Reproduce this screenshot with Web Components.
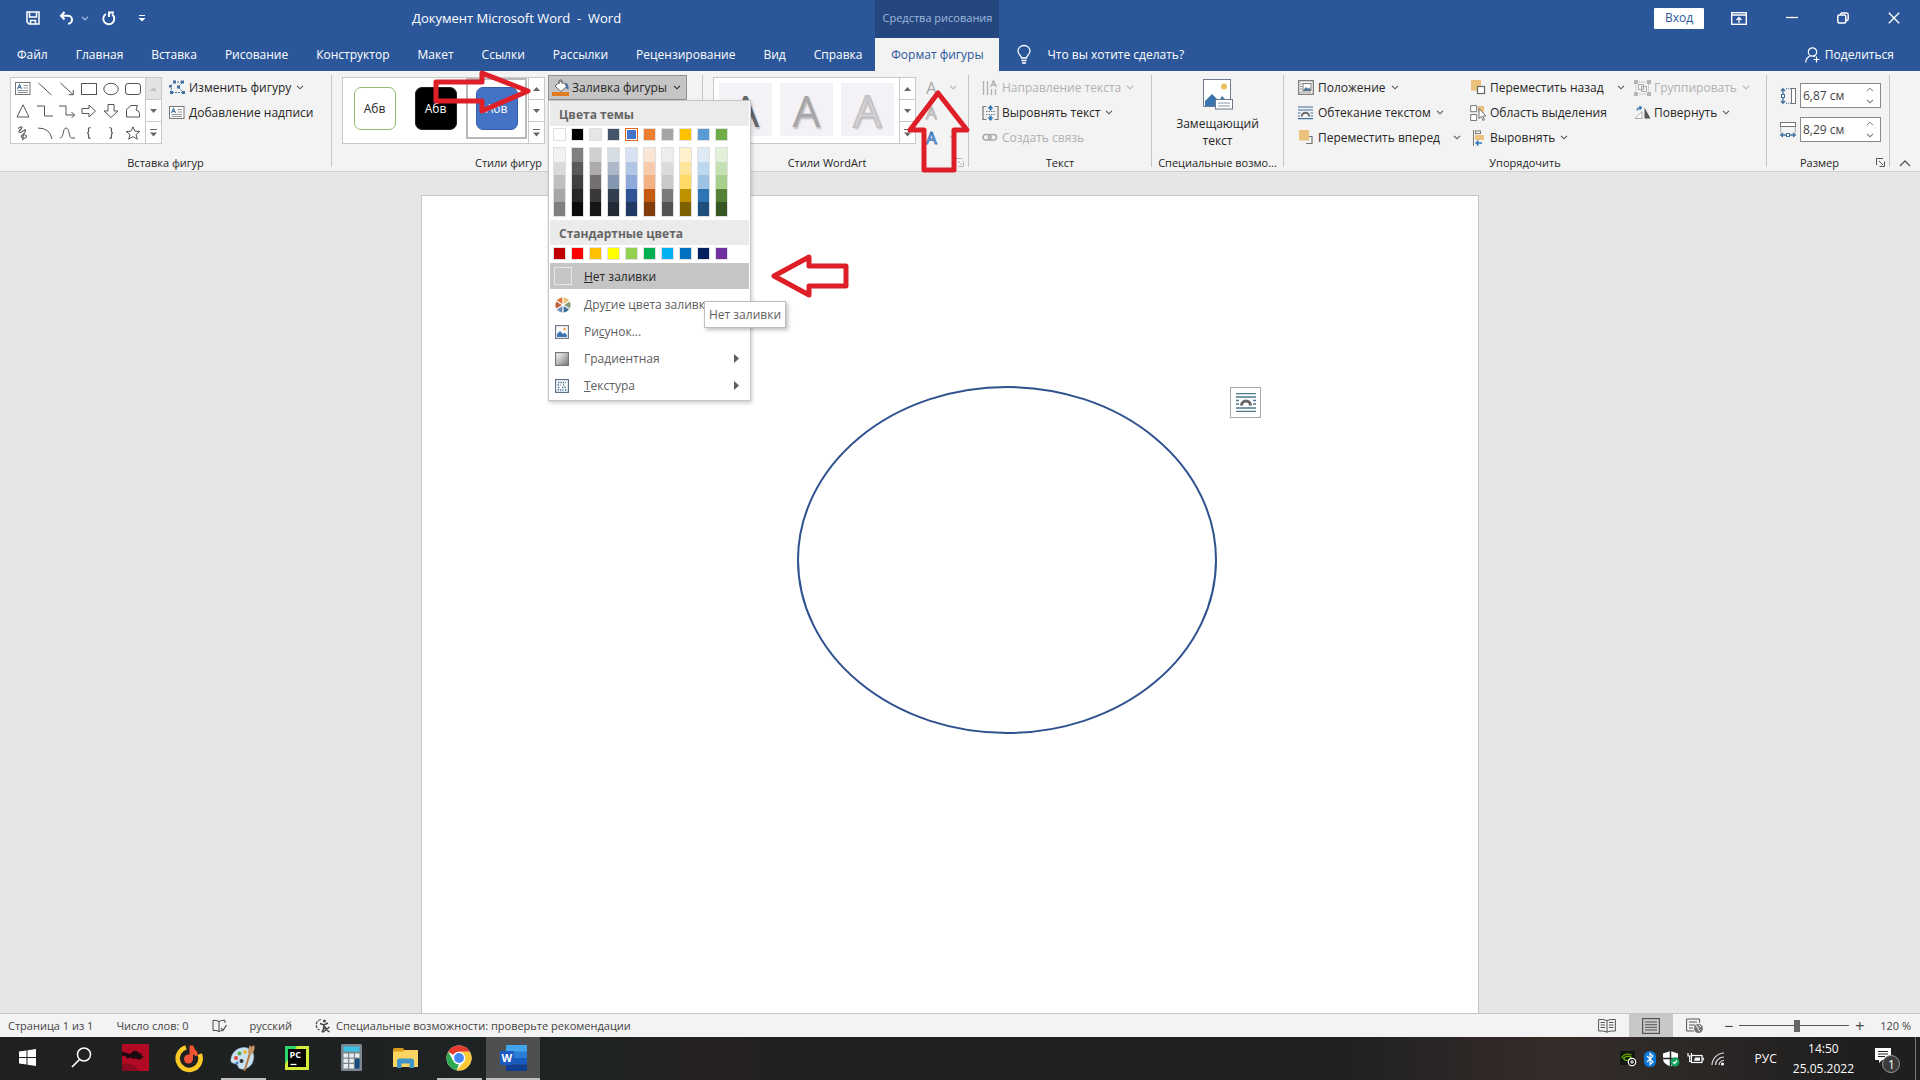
<!DOCTYPE html>
<html lang="ru">
<head>
<meta charset="utf-8">
<title>Документ Microsoft Word - Word</title>
<style>
html,body{margin:0;height:100%}
body{font-family:"Open Sans","Noto Sans",sans-serif;font-size:12px;line-height:16px;color:#262626;overflow:hidden}
</style>
</head>
<body>
<word-app></word-app>
<script>
const ICONS = {
  save:[14,14,'<path d="M1 1h12v12H3l-2-2zM3.500 1v5h7V1M4.500 13V9.500h5V13" fill="none" stroke="#fff" stroke-width="1.500"/>'],
  undo:[16,14,'<path d="M5.500 1L2 4.800l3.500 3.700M2.500 4.800H9a4 4 0 0 1 0 8" fill="none" stroke="#fff" stroke-width="2"/>'],
  redo:[15,15,'<path d="M5 3A5.500 5.500 0 1 0 11 3.300M8 6V1.500h5" fill="none" stroke="#fff" stroke-width="1.900"/>'],
  custom:[8,8,'<path d="M1 1.500h6" stroke="#fff"/><path d="M.5 4h7L4 7.500z" fill="#fff"/>'],
  chev:[8,5,'<path d="M1 .8l3 3 3-3" fill="none" stroke="currentColor" stroke-width="1.100"/>'],
  chevup:[12,7,'<path d="M1 6l5-5 5 5" fill="none" stroke="currentColor" stroke-width="1.300"/>'],
  spinup:[8,5,'<path d="M1 4.200l3-3 3 3" fill="none" stroke="currentColor"/>'],
  up:[7,4,'<path d="M0 4h7L3.500 0z" fill="currentColor"/>'],
  down:[7,4,'<path d="M0 0h7L3.500 4z" fill="currentColor"/>'],
  more:[7,8,'<path d="M0 .5h7" stroke="currentColor"/><path d="M0 3.500h7L3.500 7.500z" fill="currentColor"/>'],
  right:[5,9,'<path d="M0 0v9l5-4.500z" fill="#5e5e5e"/>'],
  ribbonopt:[16,13,'<rect x=".7" y=".7" width="14.600" height="11.600" fill="none" stroke="#fff" stroke-width="1.400"/><path d="M1 3h14" stroke="#fff" stroke-width="1.500"/><path d="M8 11V5.500M5.500 8L8 5.500 10.500 8" fill="none" stroke="#fff" stroke-width="1.300"/>'],
  min:[12,12,'<path d="M0 5.500h12" stroke="#fff" stroke-width="1.300"/>'],
  restore:[12,12,'<rect x=".8" y="3" width="8" height="8" rx="1.500" fill="none" stroke="#fff" stroke-width="1.500"/><path d="M3.500 3V2.500Q3.500 1 5 1h4.500Q11.200 1 11.200 2.800V7q0 1.500-1.500 1.500H9" fill="none" stroke="#fff" stroke-width="1.400"/>'],
  close:[12,12,'<path d="M.8.8l10.400 10.400M11.200.8L.8 11.200" stroke="#fff" stroke-width="1.400"/>'],
  bulb:[14,19,'<path d="M4.500 13C4.500 10.500 1 9.500 1 6a6 5.500 0 0 1 12 0c0 3.500-3.500 4.500-3.500 7zM4.500 15.500h5M5 18h4" fill="none" stroke="#fff" stroke-width="1.300"/>'],
  share:[15,16,'<circle cx="7.500" cy="5" r="4.200" fill="none" stroke="#fff" stroke-width="1.200"/><path d="M.7 15.500C1 12 2.500 10 5 9M8 8.800l2 1M11.500 9.500v6M8.500 12.500h6" fill="none" stroke="#fff" stroke-width="1.200"/>'],
  textbox:[16,14,'<rect x=".5" y=".5" width="14.500" height="12" fill="#fff" stroke="#777"/><path d="M2.500 7l2-4.500 2 4.500M3.300 5.500h2.500" fill="none" stroke="#41719c" stroke-width="1.100"/><path d="M8.500 3.500H13M8.500 6H13M2.500 8.500H13M2.500 10.500H13" stroke="#888" stroke-width=".9"/>'],
  line:[16,14,'<path d="M1.500 1l13 12" stroke="#555" fill="none"/>'],
  arrow:[16,14,'<path d="M1.500 1l12.500 11.500M14.300 8v4.700H9.500" stroke="#555" fill="none"/>'],
  rect:[16,14,'<rect x=".5" y="1.500" width="15" height="11" stroke="#555" fill="none"/>'],
  oval:[16,14,'<ellipse cx="8" cy="7" rx="7.200" ry="5.700" stroke="#555" fill="none"/>'],
  rrect:[16,14,'<rect x=".5" y="1.500" width="15" height="11" rx="2.500" stroke="#555" fill="none"/>'],
  tri:[16,14,'<path d="M8 .8L14 13H2z" stroke="#555" fill="none"/>'],
  elbow:[16,14,'<path d="M0 2h7.500v10H16" stroke="#555" fill="none"/>'],
  elbowa:[16,14,'<path d="M0 2h7v9h8.500M12.500 8l3 3-3 3" stroke="#555" fill="none"/>'],
  ra:[16,14,'<path d="M1 4.500h7V1l6.500 6L8 13V9.500H1z" stroke="#555" fill="none"/>'],
  da:[16,14,'<path d="M5 .5h6v6.500h4L8 13.500 1 7h4z" stroke="#555" fill="none"/>'],
  free:[16,14,'<path d="M1.500 13V5.500L6 1.500h6.500L11 6q3.500.5 3.500 3.500V13z" stroke="#555" fill="none"/>'],
  scrib:[16,14,'<path d="M3 2.500C7-.5 8 1 6 3S3 6 5 6.500s6-5 5.500-1.500S5 9 6.500 11s5 1.500 5-.5S8 8 8 10.500 9 14 7 13.500" stroke="#555" fill="none" stroke-width="1.100"/>'],
  arc:[16,14,'<path d="M1 2q12 0 14 11" stroke="#555" fill="none"/>'],
  curve:[16,14,'<path d="M1 12C5 12 3.500 2 7 2s3 10 5.500 10H16" stroke="#555" fill="none"/>'],
  lb:[16,14,'<path d="M9.500 1.500q-2 0-2 2v2q0 1.500-1.500 1.500 1.500 0 1.500 1.500v2q0 2 2 2" stroke="#555" fill="none" stroke-width="1.200"/>'],
  rb:[16,14,'<path d="M6.500 1.500q2 0 2 2v2q0 1.500 1.500 1.500-1.500 0-1.500 1.500v2q0 2-2 2" stroke="#555" fill="none" stroke-width="1.200"/>'],
  star:[16,14,'<path d="M8 .8l1.900 4.400 5 .3-3.900 3 1.300 4.700L8 10.600l-4.300 2.600L5 8.500l-3.900-3 5-.3z" stroke="#555" fill="none"/>'],
  edit:[16,15,'<path d="M5 2h8M2.500 4.500L2 12M14 12.500H4M13 3l-4 4 5 5" fill="none" stroke="#41719c" stroke-dasharray="2 1"/><g fill="#41719c"><path d="M4 .5h3v3H4zM12 .5h3v3h-3zM1 11h3v3H1zM13 11h3v3h-3zM8 5.500h3v3H8zM0 5h2.500v2.500H0z"/></g>'],
  bucket:[18,17,'<path d="M3 7l6-5 6 5-6 5.500z" fill="#fff" stroke="#666"/><path d="M7 5V1.500q1.500-1.500 3 0V5" fill="none" stroke="#666"/><path d="M13 3.500q4 1 3.500 7-2.500 0-2.500-3z" fill="#41719c"/><path d="M0 13h17v4H0z" fill="#e07b1f"/>'],
  tdir:[17,16,'<path d="M1.500 1v14M5.500 1v14M9.500 9v6M13.500 9v6M8.500 7L11.500.8 14.500 7M9.500 5h4" fill="none" stroke="#b0b0b0" stroke-width="1.300"/>'],
  talign:[17,16,'<path d="M4.500 1.500H1v13h3.500M12.500 1.500H16v13h-3.500" fill="none" stroke="#777" stroke-width="1.200"/><path d="M4 6.500h9M4 9.500h9" stroke="#777" stroke-dasharray="1.500 1"/><path d="M8.500 0l3 3.500h-2v2h-2v-2h-2zM8.500 16l3-3.500h-2v-2h-2v2h-2z" fill="#2e75b5"/>'],
  link:[16,9,'<rect x="1" y="1.500" width="8" height="5.500" rx="2.700" fill="none" stroke="#aaa" stroke-width="1.700"/><rect x="6.500" y="1.500" width="8" height="5.500" rx="2.700" fill="none" stroke="#aaa" stroke-width="1.700"/>'],
  alt:[30,31,'<rect x=".5" y=".5" width="27" height="27" fill="#fff" stroke="#6d7b8c"/><circle cx="21" cy="7.500" r="3" fill="#e8c15c"/><path d="M2 27v-5l7-7 7 7 3-5 5 5v5z" fill="#3a75b0"/><rect x="12.500" y="20.500" width="17" height="9.500" fill="#fff" stroke="#6d7b8c"/><path d="M15 24h12M15 27h12" stroke="#8c9aab"/>'],
  pos:[16,15,'<rect x=".7" y=".7" width="14.600" height="13.600" fill="#fff" stroke="#7a7a7a" stroke-width="1.300"/><rect x="5" y="3.500" width="8" height="7" fill="#fff" stroke="#777"/><path d="M5.500 10l2.500-3 2 2 1-1.500 2 2.500z" fill="#41719c"/><path d="M2 4h2M2 6.500h2M2 9h2M2 12h11" stroke="#888"/>'],
  wrap:[15,14,'<path d="M0 1h15M0 4h15M0 12.700h15M0 7h2.500M12.500 7H15M0 10h2M13 10h2" stroke="#41719c" stroke-width="1.200"/><path d="M3.800 10.500a3.700 3.700 0 0 1 7.400 0" fill="none" stroke="#666" stroke-width="2"/>'],
  fwd:[16,15,'<path d="M8 13.500h6v-7h-3" fill="none" stroke="#777" stroke-width="1.200"/><path d="M1 0h10v10.500H1z" fill="#ebc17c"/>'],
  back:[16,15,'<path d="M1 0h10v10.500H1z" fill="#ebc17c"/><rect x="7.500" y="6.500" width="7" height="7" fill="#fff" stroke="#666" stroke-width="1.200"/>'],
  selp:[17,16,'<path d="M.7.7h6v6h-6zM.7 9.500h6v6h-6z" fill="#fff" stroke="#777"/><path d="M8 1h6v7H8z" fill="#ebc17c"/><path d="M9 3.500v10l2.300-2 1.700 4 1.500-.7-1.700-3.800h3z" fill="#fff" stroke="#666" stroke-width=".9"/>'],
  align:[15,16,'<path d="M3.500 0v16" stroke="#777"/><rect x="5.500" y="1" width="5" height="2.500" fill="#fff" stroke="#777"/><path d="M5 5h9v5H5z" fill="#ebc17c"/><path d="M12 13H6M8.500 10.500L6 13l2.500 2.500" fill="none" stroke="#2e75b5" stroke-width="1.300"/>'],
  group:[17,16,'<path d="M2 2h12.500v12H2z" fill="none" stroke="#b5b5b5" stroke-dasharray="1.500 1"/><rect x="4.500" y="4.500" width="5" height="5" fill="none" stroke="#aaa"/><rect x="7.500" y="6.500" width="5" height="5" fill="none" stroke="#aaa"/><path d="M0 0h4v4H0zM13 0h4v4h-4zM0 12h4v4H0zM13 12h4v4h-4z" fill="#b5b5b5"/>'],
  rotate:[17,13,'<path d="M8 12.500H1l7-7z" fill="#fff" stroke="#aaa"/><path d="M10.500 12.500V1.500l6 11z" fill="#555"/><path d="M3 4.500Q3.500 1.500 7 1.700M5.500 0L7.500 1.700 5.500 3.800" fill="none" stroke="#2e75b5" stroke-width="1.200"/>'],
  hgt:[16,16,'<path d="M3 1v5M3 10v5M1 3l2-2.300L5 3M1 13l2 2.300L5 13" fill="none" stroke="#41719c" stroke-width="1.300"/><rect x="1.500" y="6.500" width="3" height="3" fill="#fff" stroke="#41719c"/><path d="M6 .7h5M6 15.200h5" stroke="#41719c" stroke-dasharray="1 1"/><rect x="11.500" y=".5" width="4" height="15" fill="#fff" stroke="#777"/>'],
  wid:[16,16,'<path d="M1 13h5M10 13h5M3 11L.7 13 3 15M13 11l2.300 2L13 15" fill="none" stroke="#41719c" stroke-width="1.300"/><rect x="6.500" y="11.500" width="3" height="3" fill="#fff" stroke="#41719c"/><path d="M.7 5.500v5M15.300 5.500v5" stroke="#41719c" stroke-dasharray="1 1"/><rect x=".5" y=".5" width="15" height="4" fill="#fff" stroke="#777"/>'],
  launch:[9,9,'<path d="M.5 7V.5H7M3 3l4 4M8.500 3.500v5h-5" fill="none" stroke="currentColor"/>'],
  wheel:[16,16,'<circle cx="8" cy="8" r="7.500" fill="#fff"/><path d="M8 8V.5A7.500 7.500 0 0 1 14.500 4.200z" fill="#ebc17c"/><path d="M8 8V.5A7.500 7.500 0 0 0 1.500 4.200z" fill="#e07b3a"/><path d="M8 8l6.500-3.800a7.500 7.500 0 0 1 0 7.600z" fill="#8a9a7a"/><path d="M8 8L1.500 4.200a7.500 7.500 0 0 0 0 7.600z" fill="#c4623f"/><path d="M8 8l6.500 3.800A7.500 7.500 0 0 1 8 15.500z" fill="#41719c"/><path d="M8 8l-6.500 3.800A7.500 7.500 0 0 0 8 15.500z" fill="#6c8fb8"/><path d="M8 0v16M1.500 4l13 8M14.500 4l-13 8" stroke="#fff" stroke-width="1.200"/>'],
  pic:[14,14,'<rect x=".6" y=".6" width="12.800" height="12.800" fill="#fff" stroke="#6d7b8c" stroke-width="1.200"/><circle cx="9.500" cy="4" r="1.400" fill="#e8a35c"/><path d="M2 12V9l3-3 3 3 1.500-1.500L12 10v2z" fill="#3a75b0"/>'],
  grad:[14,14,'<defs><linearGradient id="g" x1="0" y1="0" x2="1" y2="1"><stop offset="0" stop-color="#fff"/><stop offset="1" stop-color="#777"/></linearGradient></defs><rect x=".6" y=".6" width="12.800" height="12.800" fill="url(#g)" stroke="#777" stroke-width="1.200"/>'],
  tex:[14,14,'<rect x=".6" y=".6" width="12.800" height="12.800" fill="#fff" stroke="#5f7488" stroke-width="1.200"/><path d="M3 3.500h8M2.500 6h3M8 6h1M3 8.500h2M7 8.500h4.500M2.500 11h6M10 11h1.500" stroke="#41719c" stroke-width="1.300" stroke-dasharray="1.400 1"/>'],
  layout:[20,19,'<path d="M0 .7h20M0 4h20M0 15h20M0 18.300h20M0 7.500h3M17 7.500h3M0 11h3M17 11h3" stroke="#4f7a8c" stroke-width="1.300"/><path d="M5.500 12.500a4.500 4.500 0 0 1 9 0" fill="none" stroke="#666" stroke-width="3"/>'],
  spell:[15,14,'<path d="M7 2.500Q4 .8 1 1.500v10q3-.7 6 1zM7 2.500Q9 1 13 1.300V4M7 12.500q2-1 3-1" fill="none" stroke="#444"/><path d="M9 9l2 2.500L14.500 6" fill="none" stroke="#444" stroke-width="1.200"/>'],
  acc:[16,15,'<path d="M6 1.500A5.500 5.500 0 0 0 4.500 12" fill="none" stroke="#444" stroke-width="1.200" stroke-dasharray="3 1"/><path d="M5 5.500l4 1.500 4-2M9 7v3l-2 4M9 8l4 5M8 9l6.500 5M14.500 9L7.500 14.500" fill="none" stroke="#444" stroke-width="1.500"/><circle cx="9.500" cy="3" r="1.500" fill="#444"/>'],
  read:[18,15,'<path d="M9 2.500v12M9 2.500Q5 1 .6 1.500v11.500Q5 12.500 9 14q4-1.500 8.400-1V1.500Q13 1 9 2.500z" fill="none" stroke="#555"/><path d="M2.500 4.500H7M2.500 7H7M2.500 9.500H7M11 4.500h4.500M11 7h4.500M11 9.500h4.500" stroke="#555"/>'],
  print:[18,16,'<rect x=".6" y=".6" width="16.800" height="14.800" fill="none" stroke="#555" stroke-width="1.200"/><path d="M3 4h12M3 6.700h12M3 9.300h12M3 12h12" stroke="#555"/>'],
  web:[18,16,'<path d="M8 13H.6V1h13v4" fill="none" stroke="#555"/><path d="M3 4h8M3 7h6M3 10h4" stroke="#555"/><circle cx="12.500" cy="10.500" r="4.500" fill="#777"/><path d="M10 8q2 0 2 2t2 3M13 7l2 2" stroke="#fff" fill="none"/>'],
  win:[17,17,'<path d="M0 2.500L7.500 1.400V8H0zM8.500 1.300L17 0v8H8.500zM0 9h7.500v6.600L0 14.500zM8.500 9H17v8l-8.500-1.300z" fill="#fff"/>'],
  search:[21,21,'<circle cx="13" cy="7.500" r="6.500" fill="none" stroke="#fff" stroke-width="1.500"/><path d="M8.500 12.500L1 20" stroke="#fff" stroke-width="1.700"/>'],
  red:[27,27,'<path d="M0 0h27v27H0z" fill="#b30a24"/><path d="M0 7.500l5 1.500 3 1 4-3.500 5 1.500-1 1 5 1-2 1 4 2.500-4-.5 2 2.500-4-1 1 2-4-2-3 .500-2-1.500-4 1-1-2-4-1z" fill="#1d0a10"/><path d="M0 20q8-2 14 3l3 4H0z" fill="#8a0a20"/>'],
  music:[28,28,'<path d="M11 3.300A11.500 11.500 0 1 0 24.800 10" fill="none" stroke="#fbc926" stroke-width="4.500"/><circle cx="13.500" cy="15" r="4.500" fill="#f25335"/><path d="M14.500 1.500h3.800q1 4 4.200 7v4q-2.500-.5-4.500-2.500V15h-3.500z" fill="#f25335"/>'],
  paint:[28,28,'<path d="M2 15C3 7 11 2 18 4c6 2 8 7 6 13-1 5-7 9-12 8-4-1-2-4-5-5S1 19 2 15z" fill="#c9e2f2" stroke="#8fb3cc" stroke-width=".6"/><circle cx="7" cy="14" r="2" fill="#e04a3a"/><circle cx="10.500" cy="9.500" r="2" fill="#54a844"/><circle cx="16" cy="8" r="2" fill="#e8b93a"/><circle cx="12.500" cy="17" r="2" fill="#333"/><circle cx="8" cy="19" r="1.500" fill="#3e7fc1"/><path d="M20 9l2 .5-5.500 17-2 .5z" fill="#b67a42"/><path d="M19 9q0-5 2-8l1.500 2L25 1q2 4-2 9z" fill="#c49665"/>'],
  pc:[24,24,'<path d="M0 0h24v24H0z" fill="#d6ec3a"/><path d="M0 0h12L0 18z" fill="#2ed56a"/><path d="M3 3h18v18H3z" fill="#050505"/><path d="M5.500 18.500h6" stroke="#fff" stroke-width="1.300"/><text x="4.500" y="12" font-family="Open Sans,sans-serif" font-weight="700" font-size="9" fill="#fff">PC</text>'],
  calc:[21,27,'<rect width="21" height="27" rx="1.500" fill="#7c868e"/><path d="M2.500 2.500h16v5h-16z" fill="#3cc3e6"/><path d="M2.500 9.500h4.500v4H2.500zM8.300 9.500h4.500v4H8.300zM14 9.500h4.500v4H14zM2.500 14.700h4.500v4H2.500zM8.300 14.700h4.500v4H8.300zM2.500 20h4.500v4.500H2.500zM8.300 20h4.500v4.500H8.300z" fill="#e8edf0"/><path d="M14 14.700h4.500v9.800H14z" fill="#154a7e"/>'],
  folder:[25,20,'<path d="M0 1.500Q0 0 1.500 0H10l1.500 2H24q1 0 1 1.500v15H0z" fill="#d79b1d"/><path d="M0 3.500h10L12 2h13v17H0z" fill="#fcd462"/><path d="M4 20v-7q0-2.500 2.500-2.500h12Q21 10.500 21 13v7h-4.500v-4.500h-8V20z" fill="#3f94c9"/>'],
  chrome:[26,26,'<circle cx="13" cy="13" r="12.500" fill="#fff"/><path d="M13 .5a12.500 12.500 0 0 1 10.800 6.200H13a6.300 6.300 0 0 0-5.500 3.200L2.200 6.700A12.500 12.500 0 0 1 13 .5z" fill="#e33b2e"/><path d="M2.200 6.700l5.300 9.500A6.300 6.300 0 0 0 13 19.300L10.500 25.200A12.500 12.500 0 0 1 2.200 6.700z" fill="#2da94f"/><path d="M23.800 6.700A12.500 12.500 0 0 1 10.500 25.200l8-9a6.300 6.300 0 0 0 0-6.300L13 6.700z" fill="#fcc934"/><circle cx="13" cy="13" r="6.200" fill="#fff"/><circle cx="13" cy="13" r="4.900" fill="#4486f4"/>'],
  word:[27,26,'<path d="M6 0h21v7H6z" fill="#41a5ee"/><path d="M6 6.500h21V13H6z" fill="#2b7cd3"/><path d="M6 13h21v6.500H6z" fill="#185abd"/><path d="M6 19.500h21V25q0 1-1 1H7q-1 0-1-1z" fill="#103f91"/><rect y="6" width="14" height="14" rx="1.200" fill="#1c5bbf"/><text x="1.500" y="17" font-family="Open Sans,sans-serif" font-weight="700" font-size="11" fill="#fff">W</text>'],
  nvidia:[17,16,'<path d="M0 0h15v14H0z" fill="#101810"/><path d="M1.500 7q4-6 10-3M3.500 7.500q3.500-4 7.500-1.500-1.500 3.500-4.500 3.500-2 0-3-2z" fill="none" stroke="#76b900" stroke-width="1.200"/><circle cx="12" cy="11" r="3.700" fill="#111" stroke="#fff" stroke-width="1.200"/><path d="M10 11h4M12 9v4" stroke="#fff"/>'],
  bt:[12,16,'<rect width="12" height="16" rx="5.500" fill="#0a78d7"/><path d="M3 5l6 6-3 2.500v-11L9 5l-6 6" fill="none" stroke="#fff" stroke-width="1.100"/>'],
  shield:[17,16,'<path d="M7.500 0L15 2.500V8q0 5-7.500 7.500Q0 13 0 8V2.500z" fill="#fff"/><path d="M7.500 0v15.500M0 7.500h15" stroke="#222" stroke-width="1.400"/><circle cx="12" cy="11" r="4.500" fill="#12a05c"/><path d="M10 11l1.500 1.500L14 9.500" fill="none" stroke="#fff" stroke-width="1.200"/>'],
  batt:[17,13,'<rect x="4.500" y="3.500" width="10.500" height="7" fill="none" stroke="#fff" stroke-width="1.200"/><path d="M15.500 5.500h1.300v3h-1.300zM8 5.500h5v3.200H7z" fill="#fff"/><path d="M1 1v3h3.500V1M2.700 4v5.500h2" fill="none" stroke="#fff" stroke-width="1.200"/>'],
  wifi:[14,14,'<path d="M1 13A12.500 12.500 0 0 1 13 1M4.500 13A8.500 8.500 0 0 1 13 5M8 13a5 5 0 0 1 5-4.500" fill="none" stroke="#ddd" stroke-width="1.200"/><circle cx="11.500" cy="12" r="1.600" fill="#fff"/>'],
  note:[26,26,'<path d="M0 1h16v12H7l-3 3v-3H0z" fill="#fff"/><path d="M3 4.500h10M3 7h10M3 9.500h7" stroke="#222"/><circle cx="16" cy="17" r="8.500" fill="#3b3b3b" stroke="#9a9a9a"/><text x="13" y="21.500" font-family="Open Sans,sans-serif" font-size="12" fill="#fff">1</text>']
};

const BASE = `*{box-sizing:border-box}
button,input{font:inherit;color:inherit;margin:0;padding:0;border:0;background:none;text-align:left}`;

class Base extends HTMLElement {
  connectedCallback(){
    if (this.shadowRoot) return;
    this.attachShadow({mode:'open'}).innerHTML = `<style>${BASE}${this.css()}</style>${this.html()}`;
  }
  css(){ return ''; }
  html(){ return '<slot></slot>'; }
}
const define = (name, css, html) => customElements.define(name, class extends Base {
  css(){ return css; }
  html(){ return typeof html === 'function' ? html(this) : html; }
});
const icon = n => `<x-icon name="${n}"></x-icon>`;

define('x-icon', ':host{display:inline-flex;flex:none}svg{display:block;overflow:visible}', el => {
  const [w,h,body] = ICONS[el.getAttribute('name')];
  return `<svg width="${w}" height="${h}" viewBox="0 0 ${w} ${h}" aria-hidden="true">${body}</svg>`;
});

/* Title bar */
define('title-bar', `:host{display:flex;height:38px;background:#2b579a;color:#fff;align-items:center;flex:none;box-sizing:border-box;padding-bottom:2px}
.quick{display:flex;align-items:center;width:412px;padding-left:26px}
.quick button{display:flex}
.quick .undo{margin-left:19px}.quick .ch{margin-left:6px;opacity:.7}.quick .redo{margin-left:12px}.quick .cu{margin-left:22px}
h1{font-size:13px;font-weight:400;margin:0;flex:1;white-space:pre}
.login{width:50px;height:21px;background:#fff;color:#2b579a;text-align:center;border-radius:1px}
.win{display:flex;align-items:center;padding:0 20px 0 27px;gap:39px}
.win button{display:flex}`,
`<div class="quick"><button aria-label="Сохранить">${icon('save')}</button><button class="undo" aria-label="Отменить">${icon('undo')}</button><button class="ch" aria-label="Ещё">${icon('chev')}</button><button class="redo" aria-label="Повторить">${icon('redo')}</button><button class="cu" aria-label="Настройка панели">${icon('custom')}</button></div>
<h1>Документ Microsoft Word  -  Word</h1>
<button class="login">Вход</button>
<div class="win"><button aria-label="Параметры ленты">${icon('ribbonopt')}</button><button aria-label="Свернуть">${icon('min')}</button><button aria-label="Восстановить">${icon('restore')}</button><button aria-label="Закрыть">${icon('close')}</button></div>`);

/* Ribbon tabs */
define('ribbon-tabs', `:host{display:flex;height:33px;background:#2b579a;color:#fff;flex:none;padding:0 26px 0 17px;align-items:stretch}
nav{display:flex;gap:28px;margin-right:13px}
.tell{display:flex;align-items:center;gap:16px;padding-left:18px;flex:1}
.share{display:flex;align-items:center;gap:5px}`,
`<nav><slot></slot></nav><slot name="context"></slot><button class="tell">${icon('bulb')}Что вы хотите сделать?</button><button class="share">${icon('share')}Поделиться</button>`);
define('ribbon-tab', `:host{display:flex;position:relative}
button{display:flex;align-items:center;justify-content:center}
:host([context]) button{width:124px;background:#f3f3f3;color:#2b579a}
span{position:absolute;left:0;right:0;bottom:100%;height:38px;padding-bottom:2px;background:#24477f;color:#a0b7dc;display:flex;align-items:center;justify-content:center;font-size:11px}`,
el => `${el.hasAttribute('context') ? `<span>${el.getAttribute('context')}</span>` : ''}<button><slot></slot></button>`);

/* Ribbon group and its buttons */
define('ribbon-group', `:host{display:flex;flex:none;width:var(--w)}
.col{flex:1;display:flex;flex-direction:column;min-width:0}
.body{flex:1;display:flex;padding:4px 0 0 var(--pad,10px)}
.foot{display:flex;height:17px;align-items:center;padding:0 4px;gap:8px;font-size:11px}
.foot p{margin:0;flex:1;text-align:center;white-space:nowrap}
.foot button{display:flex;width:9px;color:#555}
.foot button:disabled{color:#b5b5b5}
i{width:1px;background:#c6c6c6;margin:4px 0}`,
el => `<div class="col"><div class="body"><slot></slot></div><div class="foot"><p>${el.getAttribute('label')}</p>${el.hasAttribute('launcher') ? `<button aria-label="Параметры" ${el.getAttribute('launcher') === 'off' ? 'disabled' : ''}>${icon('launch')}</button>` : ''}</div></div><i></i>`);
define('ribbon-button', `:host{display:flex;height:25px;white-space:nowrap}
button{display:flex;align-items:center;flex:none}
.ic{width:20px;display:flex;flex:none}
.ch{margin-left:5px;display:flex;color:#555}
:host([split]) .ch{margin-left:13px}
:host([disabled]){color:#b1b1b1}:host([disabled]) .ch{color:#b1b1b1}`,
el => `<button ${el.hasAttribute('disabled') ? 'disabled' : ''}><span class="ic">${icon(el.getAttribute('icon'))}</span><slot></slot>${el.hasAttribute('menu') ? `<span class="ch">${icon('chev')}</span>` : ''}</button>`);
define('button-stack', ':host{display:flex;flex-direction:column}', '<slot></slot>');

/* Gallery frame with its scroll column */
define('gallery-box', `:host{display:flex;border:1px solid #c9c9c9;background:#fff;height:67px;margin-top:2px;flex:none;box-sizing:border-box}
.items{flex:1;display:flex}
.sc{display:flex;flex-direction:column;width:16px;border-left:1px solid #c9c9c9;color:#666}
.sc button{flex:1;display:flex;align-items:center;justify-content:center}
.sc button+button{border-top:1px solid #c9c9c9}
:host([top]) .sc button:first-child{background:#e3e3e3;color:#c3c3c3}`,
`<div class="items"><slot></slot></div><div class="sc"><button aria-label="Вверх">${icon('up')}</button><button aria-label="Вниз">${icon('down')}</button><button aria-label="Дополнительно">${icon('more')}</button></div>`);
define('shape-grid', `:host{display:grid;grid-template-columns:repeat(6,22px);grid-auto-rows:22px;flex:1;padding-left:1px}
button{display:flex;align-items:center;justify-content:center}`,
['textbox','line','arrow','rect','oval','rrect','tri','elbow','elbowa','ra','da','free','scrib','arc','curve','lb','rb','star'].map(n => `<button aria-label="${n}">${icon(n)}</button>`).join(''));
define('style-tile', `:host{display:flex;width:61px;height:61px;box-sizing:border-box;align-items:center;justify-content:center}
:host(:first-child){margin-left:1px}
:host([selected]){border:2px solid #b9b9b9}
button{width:42px;height:43px;flex:none;border-radius:7px;background:var(--bg);border:1px solid var(--bd);color:var(--fg);text-align:center}`, '<button><slot></slot></button>');
define('art-tile', `:host{display:flex;width:53px;height:53px;margin:5px 0 0 5px;background:#f4f2f6}
:host(:not(:first-child)){margin-left:8px}
button{flex:1;text-align:center;font-size:44px;line-height:52px;color:var(--fg);-webkit-text-stroke:var(--st,0);text-shadow:1px 2px 2px rgba(0,0,0,.25)}`, '<button><slot></slot></button>');
define('art-buttons', `:host{display:flex;flex-direction:column;margin-left:10px;font-size:17px;color:#a9a9a9}
button{height:25px;display:flex;align-items:center;gap:12px}
.b{color:#fff;-webkit-text-stroke:1px #b5b5b5}.c{color:#fff;-webkit-text-stroke:1px #3c78c0}
x-icon{color:#b1b1b1}`,
`<button><span>A</span>${icon('chev')}</button><button><span class="b">A</span></button><button><span class="c">A</span>${icon('chev')}</button>`);

/* Shape fill drop-down */
const THEME = [['ffffff','f2f2f2','d9d9d9','bfbfbf','a6a6a6','7f7f7f'],['000000','7f7f7f','595959','3f3f3f','262626','0c0c0c'],['e7e6e6','d0cece','aeabab','757070','3a3838','171616'],['44546a','d6dce4','adb9ca','8496b0','323f4f','222a35'],['4472c4','d9e2f3','b4c6e7','8eaadb','2f5496','1f3864'],['ed7d31','fbe5d5','f7cbac','f4b183','c55a11','833c0b'],['a5a5a5','ededed','dbdbdb','c9c9c9','7b7b7b','525252'],['ffc000','fff2cc','fee599','ffd965','bf9000','7f6000'],['5b9bd5','deebf6','bdd7ee','9cc3e5','2e75b5','1e4e79'],['70ad47','e2efd9','c5e0b3','a8d08d','538135','375623']];
const STD = ['c00000','ff0000','ffc000','ffff00','92d050','00b050','00b0f0','0070c0','002060','7030a0'];
const sw = (c, cls='') => `<button class="${cls}" style="background:#${c}" aria-label="#${c}"></button>`;
define('fill-menu', `:host{display:block;position:absolute;z-index:5;left:0;top:100%;width:203px;box-sizing:border-box;background:#fff;border:1px solid #c6c6c6;box-shadow:1px 2px 4px rgba(0,0,0,.2);color:#5e5e5e;padding:0 1px 1px}
h2{margin:0;height:25px;background:#ebebeb;padding-left:9px;font-size:12px;line-height:28px;font-weight:700;color:#666}
.row{display:flex;gap:5px;padding:2px 3px 3px}
.row button{width:13px;height:13px;border:1px solid #e0e0e0}
.row .sel{border:1px solid #e0641c;box-shadow:inset 0 0 0 1px #fff}
.cols{display:flex;gap:5px;padding:3px}
.cols div{display:flex;flex-direction:column;width:13px;height:70px;border:1px solid #e0e0e0}
.cols button{flex:1}
`, `<h2>Цвета темы</h2><div class="row">${THEME.map((c,i) => sw(c[0], i === 4 ? 'sel' : '')).join('')}</div>
<div class="cols">${THEME.map(c => `<div>${c.slice(1).map(x => sw(x)).join('')}</div>`).join('')}</div>
<h2>Стандартные цвета</h2><div class="row">${STD.map(c => sw(c)).join('')}</div><slot></slot>`);
define('menu-item', `:host{display:flex;height:27px;position:relative}
:host([active]){background:#c5c5c5;color:#262626;height:26px;margin-bottom:2px}
button{display:flex;align-items:center;flex:1;white-space:pre}
.ic{width:34px;padding-left:5px;display:flex;flex:none;align-items:center}
.none{width:18px;height:18px;border:1px solid #e6e6e6;margin-left:-1px}
.t{flex:1;padding-top:1px}.ar{padding-right:10px;display:flex}`,
el => `<button><span class="ic">${el.hasAttribute('icon') ? icon(el.getAttribute('icon')) : '<i class="none"></i>'}</span><span class="t"><slot></slot></span>${el.hasAttribute('sub') ? `<span class="ar">${icon('right')}</span>` : ''}</button><slot name="tip"></slot>`);
define('tool-tip', ':host{position:absolute;z-index:6;left:154px;top:38px;box-sizing:border-box;background:#fff;border:1px solid #bebebe;box-shadow:2px 2px 4px rgba(0,0,0,.25);color:#5e5e5e;height:27px;width:82px;padding-top:1px;display:flex;align-items:center;justify-content:center;white-space:nowrap}', '<slot></slot>');
define('fill-button', `:host{display:block;position:relative;height:25px;margin-left:3px}
.b{display:flex;align-items:center;height:25px;width:139px;background:#c5c5c5;border:1px solid #919191;padding-left:3px;gap:2px;white-space:nowrap}
.b x-icon:last-child{margin-left:4px}`, `<button class="b">${icon('bucket')}Заливка фигуры${icon('chev')}</button><slot></slot>`);

/* Alt text and size controls */
define('alt-button', `:host{display:flex;flex:1;justify-content:center}
button{display:flex;flex-direction:column;align-items:center;justify-content:flex-start;line-height:17px;text-align:center;gap:5px;padding-top:4px}`, `<button>${icon('alt')}<span>Замещающий<br>текст</span></button>`);
define('size-field', `:host{display:flex;margin-bottom:9px}
label{display:flex;align-items:center;gap:4px}
div{display:flex;width:81px;height:25px;border:1px solid #8a8a8a;background:#fff}
input{width:60px;padding-left:2px;outline:0;color:#444;font-size:12px}
span{display:flex;flex-direction:column;justify-content:space-around;align-items:center;width:18px;color:#777}
span button{display:flex}`,
el => `<label>${icon(el.getAttribute('icon'))}<div><input aria-label="${el.getAttribute('name')}" value="${el.getAttribute('value')}"><span><button aria-label="Больше">${icon('spinup')}</button><button aria-label="Меньше">${icon('chev')}</button></span></div></label>`);
define('size-stack', ':host{display:flex;flex-direction:column;padding-top:8px}', '<slot></slot>');
define('arrange-grid', ':host{display:grid;grid-template-columns:172px 164px auto;align-content:start}', '<slot></slot>');

define('word-ribbon', `:host{display:flex;height:101px;box-sizing:border-box;background:#f3f3f3;border-bottom:1px solid #cfcfcf;flex:none;position:relative;z-index:2}
.fold{flex:1;display:flex;align-items:flex-end;padding:0 0 4px 9px;color:#555}
.sp{margin-left:7px}`, `
<ribbon-group label="Вставка фигур" style="--w:332px"><gallery-box top style="width:152px"><shape-grid></shape-grid></gallery-box>
<button-stack class="sp"><ribbon-button icon="edit" menu>Изменить фигуру</ribbon-button><ribbon-button icon="textbox">Добавление надписи</ribbon-button></button-stack></ribbon-group>
<ribbon-group label="Стили фигур" launcher style="--w:371px"><gallery-box style="width:203px">
<style-tile style="--bg:#fff;--bd:#8fbc72;--fg:#262626">Абв</style-tile><style-tile style="--bg:#000;--bd:#222;--fg:#fff">Абв</style-tile><style-tile selected style="--bg:#4472c4;--bd:#3560ae;--fg:#fff">Абв</style-tile></gallery-box>
<fill-button><fill-menu><menu-item active><u>Н</u>ет заливки<tool-tip slot="tip">Нет заливки</tool-tip></menu-item><menu-item icon="wheel">Дру<u>г</u>ие цвета заливки...</menu-item><menu-item icon="pic">Ри<u>с</u>унок...</menu-item><menu-item icon="grad" sub>Гра<u>д</u>иентная</menu-item><menu-item icon="tex" sub><u>Т</u>екстура</menu-item></fill-menu></fill-button></ribbon-group>
<ribbon-group label="Стили WordArt" launcher="off" style="--w:266px"><gallery-box style="width:203px"><art-tile style="--fg:#66666b">A</art-tile><art-tile style="--fg:#a6a6a8">A</art-tile><art-tile style="--fg:#dcdadc;--st:2px #c4c2c5">A</art-tile></gallery-box><art-buttons></art-buttons></ribbon-group>
<ribbon-group label="Текст" style="--w:183px;--pad:13px"><button-stack><ribbon-button icon="tdir" menu disabled>Направление текста</ribbon-button><ribbon-button icon="talign" menu>Выровнять текст</ribbon-button><ribbon-button icon="link" disabled>Создать связь</ribbon-button></button-stack></ribbon-group>
<ribbon-group label="Специальные возмо..." style="--w:132px;--pad:0px"><alt-button></alt-button></ribbon-group>
<ribbon-group label="Упорядочить" style="--w:483px;--pad:14px"><arrange-grid>
<ribbon-button icon="pos" menu>Положение</ribbon-button><ribbon-button icon="back" menu split>Переместить назад</ribbon-button><ribbon-button icon="group" menu disabled>Группировать</ribbon-button>
<ribbon-button icon="wrap" menu>Обтекание текстом</ribbon-button><ribbon-button icon="selp">Область выделения</ribbon-button><ribbon-button icon="rotate" menu>Повернуть</ribbon-button>
<ribbon-button icon="fwd" menu split>Переместить вперед</ribbon-button><ribbon-button icon="align" menu>Выровнять</ribbon-button></arrange-grid></ribbon-group>
<ribbon-group label="Размер" launcher style="--w:123px;--pad:13px"><size-stack><size-field icon="hgt" name="Высота" value="6,87 см"></size-field><size-field icon="wid" name="Ширина" value="8,29 см"></size-field></size-stack></ribbon-group>
<button class="fold" aria-label="Свернуть ленту">${icon('chevup')}</button>`);

/* Document */
define('doc-canvas', `:host{display:flex;flex:1;min-height:0;background:#e6e6e6;justify-content:center;box-sizing:border-box;padding:23px 20px 0 0;overflow:hidden}
main{width:1058px;background:#fff;border:1px solid #c6c6c6;border-bottom:0;position:relative}
.shape{position:absolute;left:374px;top:190px}
.opt{position:absolute;left:808px;top:191px;width:31px;height:31px;border:1px solid #a9a9a9;background:#fff;display:flex;align-items:center;justify-content:center}`,
`<main><svg class="shape" width="422" height="350"><ellipse cx="211" cy="174" rx="209" ry="173" fill="none" stroke="#2f528f" stroke-width="2"/></svg><button class="opt" aria-label="Параметры разметки">${icon('layout')}</button></main>`);

/* Status bar */
define('status-bar', `:host{display:flex;height:24px;box-sizing:border-box;border-top:1px solid #c6c6c6;background:#f3f3f3;align-items:center;padding:0 9px 0 8px;color:#444;font-size:11px;flex:none}
.l{display:flex;align-items:center;gap:23px;flex:1}
.a,.z{display:flex;align-items:center}.a{gap:5px}
.v{display:flex;align-items:center;height:23px;margin-right:7px}
.v button{width:44px;height:23px;display:flex;align-items:center;justify-content:center}.v .on{background:#c8c8c8}
.z{gap:6px}
.z button{font-size:16px;width:9px;text-align:center;line-height:16px}
input{appearance:none;width:110px;height:12px;background:linear-gradient(#555,#555) center/100% 1px no-repeat}
input::-webkit-slider-thumb{appearance:none;width:6px;height:12px;background:#666}
output{margin-left:10px}`,
`<div class="l"><span>Страница 1 из 1</span><span>Число слов: 0</span>${icon('spell')}<span>русский</span><button class="a">${icon('acc')}Специальные возможности: проверьте рекомендации</button></div>
<div class="v"><button aria-label="Режим чтения">${icon('read')}</button><button class="on" aria-label="Разметка страницы">${icon('print')}</button><button aria-label="Веб-документ">${icon('web')}</button></div>
<div class="z"><button>−</button><input type="range" value="53" aria-label="Масштаб"><button>+</button><output>120 %</output></div>`);

/* Task bar */
define('task-bar', `:host{display:flex;height:43px;background:linear-gradient(90deg,#202020 0,#1d2323 30%,#242120 36%,#202020 50%,#202022 70%,#362c29 81%,#2e2a28 86%,#201f1f 96%);color:#fff;flex:none}
.apps{display:flex;flex:1}
.apps button{width:54px;display:flex;align-items:center;justify-content:center;padding-bottom:2px}
.apps .run{background:linear-gradient(#c0c0c0,#c0c0c0) center bottom/45px 2px no-repeat}
.apps .on{background:linear-gradient(#c0c0c0,#c0c0c0) center bottom/54px 2px no-repeat #4d4f50}
.tray{display:flex;align-items:center;gap:7px}
.lang{margin-left:23px}
.clock{text-align:center;line-height:20px;margin-left:9px;padding-top:1px}
.note{display:flex;margin:2px 7px 0 14px}
.desk{width:5px;align-self:stretch;border-left:1px solid #777}`,
`<div class="apps">${[['win'],['search'],['red'],['music'],['paint','run'],['pc'],['calc'],['folder'],['chrome','run'],['word','on']].map(([n,c='']) => `<button class="${c}" aria-label="${n}">${icon(n)}</button>`).join('')}</div>
<div class="tray">${['nvidia','bt','shield','batt','wifi'].map(icon).join('')}<span class="lang">РУС</span><div class="clock">14:50<br>25.05.2022</div><button class="note" aria-label="Уведомления">${icon('note')}</button><div class="desk"></div></div>`);

/* Red pointer arrows laid over the window */
define('red-arrow', ':host{position:absolute;z-index:9;pointer-events:none}svg{display:block;overflow:visible}',
el => `<svg width="${el.getAttribute('w')}" height="${el.getAttribute('h')}"><polygon points="${el.getAttribute('points')}" fill="none" stroke="#df1f28" stroke-width="5" stroke-linejoin="round"/></svg>`);

define('word-app', ':host{display:flex;flex-direction:column;height:100vh;position:relative}', `
<title-bar></title-bar>
<ribbon-tabs>${['Файл','Главная','Вставка','Рисование','Конструктор','Макет','Ссылки','Рассылки','Рецензирование','Вид','Справка'].map(t => `<ribbon-tab>${t}</ribbon-tab>`).join('')}<ribbon-tab slot="context" context="Средства рисования">Формат фигуры</ribbon-tab></ribbon-tabs>
<word-ribbon></word-ribbon>
<doc-canvas></doc-canvas>
<status-bar></status-bar>
<task-bar></task-bar>
<red-arrow style="left:434px;top:70px" w="95" h="43" points="2,12 48,12 48,3 94,21 48,41 48,31 2,31"></red-arrow>
<red-arrow style="left:772px;top:254px" w="77" h="44" points="2,22 37,3 37,12 74,12 74,32 37,32 37,41"></red-arrow>
<red-arrow style="left:907px;top:89px" w="63" h="83" points="31,4 60,41 47,41 47,81 17,81 17,41 3,41"></red-arrow>`);
</script>
</body>
</html>
